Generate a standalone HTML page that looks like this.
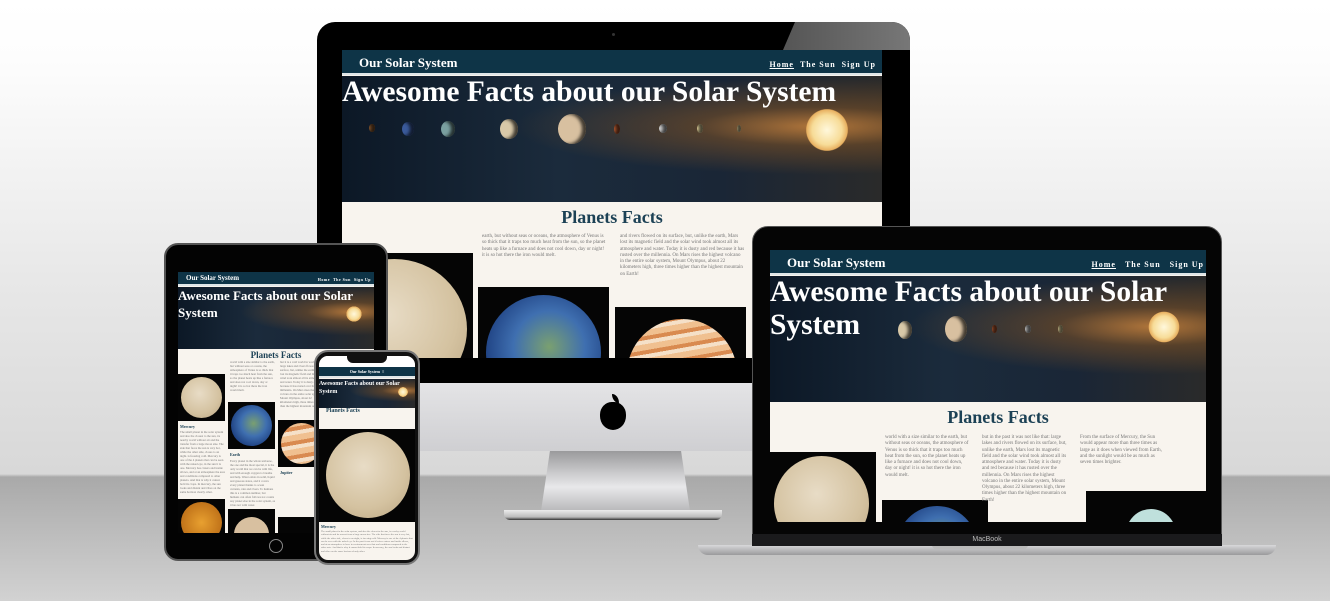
<!DOCTYPE html>
<html><head><meta charset="utf-8"><style>
*{margin:0;padding:0;box-sizing:border-box}
body{width:1330px;height:601px;overflow:hidden;position:relative;font-family:"Liberation Serif",serif;
background:linear-gradient(180deg,#fff 0,#fdfdfd 60px,#e6e6e6 300px,#d8d8d8 474px,#a9a9a9 477px,#b8b8b8 520px,#d2d2d2 601px)}
.a{position:absolute}
.nav{background:#0e3447;color:#fff;font-weight:bold;border-bottom:2px solid #dfe6e8}
.hero{background:
radial-gradient(circle at 50% 50%,#fff8dc 0,#f7dc98 35%,#e8b060 48%,rgba(230,150,60,0) 50%) no-repeat,
radial-gradient(ellipse at 88% 40%,rgba(200,130,60,.85) 0,rgba(120,80,40,.6) 18%,rgba(20,30,45,0) 45%),
linear-gradient(90deg,#0c1826,#1b2b3c 40%,#1a2636 70%,#2a2a2a);color:#fff;font-weight:bold;overflow:hidden}
.h2{color:#1c4155;font-weight:bold;text-align:center}
.txt{color:#777;line-height:1.25}
.img{background:#050505;overflow:hidden}
.pl{position:absolute;border-radius:50%}
.merc{background:radial-gradient(circle at 45% 40%,#e8dcc6,#d4c2a0 60%,#b8a380)}
.earth{background:radial-gradient(circle at 55% 45%,#7aa070,#3f6fb0 40%,#1d3f80 75%)}
.jup{background:repeating-linear-gradient(170deg,#f0c090 0 6px,#d98a50 6px 10px,#f5e0c8 10px 14px)}
.dot{position:absolute;border-radius:50%;box-shadow:inset -4px 0 3px rgba(0,0,0,.7)}
</style></head><body>

<!-- iMac -->
<div class="a" style="left:317px;top:22px;width:593px;height:362px;background:#000;border-radius:18px 18px 0 0"></div>
<div class="a" style="left:783px;top:22px;width:127px;height:28px;background:linear-gradient(90deg,#555,#777);clip-path:polygon(12px 0,100% 0,100% 100%,0 100%);border-radius:0 18px 0 0"></div>
<div class="a" style="left:612px;top:33px;width:3px;height:3px;border-radius:50%;background:#333"></div>
<div class="a" style="left:317px;top:383px;width:593px;height:68px;background:linear-gradient(#e4e4e6,#cfcfd2);border-radius:0 0 10px 10px"></div>
<div class="a" style="left:600px;top:402px;width:26px;height:28px;background:#000;border-radius:45% 45% 50% 50%"></div>
<div class="a" style="left:612px;top:394px;width:7px;height:9px;background:#000;border-radius:0 100% 0 100%"></div>
<div class="a" style="left:541px;top:451px;width:149px;height:60px;background:linear-gradient(#9a9a9c,#cfcfd1 40%,#e8e8ea 60%,#b8b8ba);clip-path:polygon(6% 0,94% 0,100% 100%,0 100%)"></div>
<div class="a" style="left:504px;top:510px;width:218px;height:10px;background:linear-gradient(#ececec,#bbb 70%,#333);border-radius:0 0 6px 6px"></div>

<div class="a" style="left:342px;top:50px;width:540px;height:308px;overflow:hidden;background:#f8f4ee">
 <div class="a nav" style="left:0;top:0;width:540px;height:25px"><span class="a" style="left:17px;top:5px;font-size:13px">Our Solar System</span><span class="a" style="right:6px;top:10px;font-size:8px;letter-spacing:1px"><u>Home</u>&nbsp;&nbsp;The Sun&nbsp;&nbsp;Sign Up</span></div>
 <div class="a hero" style="left:0;top:26px;width:540px;height:126px;background-size:60px 60px,auto,auto;background-position:455px 24px,0 0,0 0">
  <div class="a" style="left:0;top:0;font-size:29.5px;white-space:nowrap">Awesome Facts about our Solar System</div>
  <div class="dot" style="left:27px;top:48px;width:6px;height:8px;background:#8a5a30"></div>
  <div class="dot" style="left:60px;top:46px;width:12px;height:14px;background:#3a5a9a"></div>
  <div class="dot" style="left:99px;top:45px;width:14px;height:16px;background:#7aa0a0"></div>
  <div class="dot" style="left:158px;top:43px;width:18px;height:20px;background:#d8c8a8"></div>
  <div class="dot" style="left:216px;top:38px;width:28px;height:30px;background:#d8c0a0"></div>
  <div class="dot" style="left:272px;top:48px;width:6px;height:10px;background:#b85a30"></div>
  <div class="dot" style="left:317px;top:48px;width:8px;height:9px;background:#ccc"></div>
  <div class="dot" style="left:355px;top:48px;width:6px;height:9px;background:#e8d8a0"></div>
  <div class="dot" style="left:395px;top:49px;width:4px;height:7px;background:#e8d8a0"></div>
 </div>
 <div class="a h2" style="left:0;top:157px;width:540px;font-size:18px">Planets Facts</div>
 <div class="a img" style="left:0;top:203px;width:131px;height:110px"><div class="pl merc" style="left:-20px;top:6px;width:145px;height:140px"></div></div>
 <div class="a txt" style="left:140px;top:184px;width:125px;font-size:5px">earth, but without seas or oceans, the atmosphere of Venus is so thick that it traps too much heat from the sun, so the planet heats up like a furnace and does not cool down, day or night! it is so hot there the iron would melt.</div>
 <div class="a img" style="left:136px;top:237px;width:131px;height:80px"><div class="pl earth" style="left:8px;top:8px;width:115px;height:115px"></div></div>
 <div class="a txt" style="left:278px;top:184px;width:125px;font-size:5px">and rivers flowed on its surface, but, unlike the earth, Mars lost its magnetic field and the solar wind took almost all its atmosphere and water. Today it is dusty and red because it has rusted over the millennia. On Mars rises the highest volcano in the entire solar system, Mount Olympus, about 22 kilometers high, three times higher than the highest mountain on Earth!</div>
 <div class="a img" style="left:273px;top:257px;width:131px;height:60px"><div class="pl jup" style="left:12px;top:12px;width:110px;height:110px"></div></div>
</div>

<!-- Laptop -->
<div class="a" style="left:752px;top:226px;width:470px;height:320px;background:#050505;border-radius:16px 16px 0 0;border:1px solid #555"></div>
<div class="a" style="left:698px;top:545px;width:578px;height:10px;background:linear-gradient(#d8d8da,#9a9a9c);border-radius:0 0 40px 40px"></div>
<div class="a" style="left:932px;top:545px;width:96px;height:4px;background:#bbb;border-radius:0 0 4px 4px"></div>
<div class="a" style="left:752px;top:534px;width:470px;height:12px;background:#1a1a1c;color:#bbb;font-family:'Liberation Sans',sans-serif;font-size:7px;text-align:center;line-height:12px">MacBook</div>
<div class="a" style="left:770px;top:250px;width:436px;height:272px;overflow:hidden;background:#f8f4ee">
 <div class="a nav" style="left:0;top:0;width:436px;height:25px"><span class="a" style="left:17px;top:5px;font-size:13px">Our Solar System</span><span class="a" style="right:2px;top:10px;font-size:8px;letter-spacing:1px"><u>Home</u>&nbsp;&nbsp;&nbsp;The Sun&nbsp;&nbsp;&nbsp;Sign Up</span></div>
 <div class="a hero" style="left:0;top:26px;width:436px;height:126px;background-size:44px 44px,auto,auto;background-position:372px 29px,0 0,0 0">
  <div class="a" style="left:0;top:0;font-size:29.5px;line-height:33px;width:436px">Awesome Facts about our Solar System</div>
  <div class="dot" style="left:128px;top:45px;width:14px;height:18px;background:#d8c8a8"></div>
  <div class="dot" style="left:175px;top:40px;width:22px;height:26px;background:#d8c0a0"></div>
  <div class="dot" style="left:222px;top:49px;width:5px;height:8px;background:#b85a30"></div>
  <div class="dot" style="left:255px;top:49px;width:6px;height:8px;background:#ccc"></div>
  <div class="dot" style="left:288px;top:49px;width:5px;height:8px;background:#e8d8a0"></div>
 </div>
 <div class="a h2" style="left:0;top:157px;width:456px;font-size:18px">Planets Facts</div>
 <div class="a img" style="left:0;top:202px;width:106px;height:80px"><div class="pl merc" style="left:4px;top:4px;width:95px;height:95px"></div></div>
 <div class="a txt" style="left:115px;top:185px;width:85px;font-size:5px">world with a size similar to the earth, but without seas or oceans, the atmosphere of Venus is so thick that it traps too much heat from the sun, so the planet heats up like a furnace and does not cool down, day or night! it is so hot there the iron would melt.</div>
 <div class="a img" style="left:112px;top:250px;width:106px;height:30px"><div class="pl earth" style="left:15px;top:6px;width:80px;height:80px"></div></div>
 <div class="a txt" style="left:212px;top:185px;width:85px;font-size:5px">but in the past it was not like that: large lakes and rivers flowed on its surface, but, unlike the earth, Mars lost its magnetic field and the solar wind took almost all its atmosphere and water. Today it is dusty and red because it has rusted over the millennia. On Mars rises the highest volcano in the entire solar system, Mount Olympus, about 22 kilometers high, three times higher than the highest mountain on Earth!</div>
 <div class="a txt" style="left:310px;top:185px;width:86px;font-size:5px">From the surface of Mercury, the Sun would appear more than three times as large as it does when viewed from Earth, and the sunlight would be as much as seven times brighter.</div>
 <div class="a img" style="left:316px;top:241px;width:120px;height:40px"><div class="pl" style="left:40px;top:18px;width:50px;height:50px;background:#bfe0dc"></div></div>
</div>

<!-- Tablet -->
<div class="a" style="left:164px;top:243px;width:224px;height:318px;background:#030303;border-radius:14px;border:2px solid #555"></div>
<div class="a" style="left:269px;top:539px;width:14px;height:14px;border-radius:50%;border:1px solid #888"></div>
<div class="a" style="left:178px;top:272px;width:196px;height:261px;overflow:hidden;background:#f8f4ee">
 <div class="a nav" style="left:0;top:0;width:196px;height:14px"><span class="a" style="left:8px;top:2px;font-size:7px">Our Solar System</span><span class="a" style="right:3px;top:5px;font-size:4px;letter-spacing:.5px">Home&nbsp;&nbsp;The Sun&nbsp;&nbsp;Sign Up</span></div>
 <div class="a hero" style="left:0;top:15px;width:196px;height:62px;background-size:22px 22px,auto,auto;background-position:165px 16px,0 0,0 0">
  <div class="a" style="left:0;top:0;font-size:13px;line-height:17px;width:190px">Awesome Facts about our Solar System</div>
 </div>
 <div class="a h2" style="left:0;top:78px;width:196px;font-size:9px">Planets Facts</div>
 <div class="a img" style="left:0;top:102px;width:47px;height:47px"><div class="pl merc" style="left:3px;top:3px;width:41px;height:41px"></div></div>
 <div class="a" style="left:2px;top:152px;font-size:4px;color:#1c4155;font-weight:bold">Mercury</div>
 <div class="a txt" style="left:2px;top:158px;width:45px;font-size:3px;line-height:4px">The small planet in the solar system and also the closest to the sun, its nearby world without air and the transfer from a large moon size. The side that faces the sun is very hot, while the other side, closes to an night. is freezing cold. Mercury is one of the 4 planets that can be seen with the naked eye, in the sun it is one. Mercury has craters and inside allows, and at an atmosphere the area and conditions compared to other planets. And that is why it cannot hold its crops. In mercury, the sun looks and distant and vibes on the same horizon clearly other.</div>
 <div class="a img" style="left:0;top:227px;width:47px;height:40px"><div class="pl" style="left:3px;top:3px;width:41px;height:41px;background:radial-gradient(#e8a030,#b06010)"></div></div>
 <div class="a txt" style="left:52px;top:88px;width:45px;font-size:3px;line-height:4px">world with a size similar to the earth, but without seas or oceans, the atmosphere of Venus is so thick that it traps too much heat from the sun, so the planet heats up like a furnace and does not cool down, day or night! it is so hot there the iron would melt.</div>
 <div class="a img" style="left:50px;top:130px;width:47px;height:47px"><div class="pl earth" style="left:3px;top:3px;width:41px;height:41px"></div></div>
 <div class="a" style="left:52px;top:180px;font-size:4px;color:#1c4155;font-weight:bold">Earth</div>
 <div class="a txt" style="left:52px;top:187px;width:45px;font-size:3px;line-height:4px">Every planet in the whole universe, the one and the most special, it is the only world that we can be with life, and with enough oxygen to breathe and help. Water exists in solid, liquid and gaseous states, and it covers every planet thanks to ocean currents, rain and rivers. To humans this is a common number, but humans can often follows not counts any planet else in the solar system, as it has not with water.</div>
 <div class="a img" style="left:50px;top:237px;width:47px;height:30px"><div class="pl" style="left:6px;top:8px;width:35px;height:35px;background:#d8c0a0"></div></div>
 <div class="a txt" style="left:102px;top:88px;width:45px;font-size:3px;line-height:4px">but it is a cold world in world with large lakes and rivers flowed on its surface, but, unlike the earth, Mars lost its magnetic field and the solar wind took almost all its atmosphere and water. Today it is dusty and red because it has rusted over the millennia. On Mars rises the highest volcano in the entire solar system, Mount Olympus, about 22 kilometers high, three times higher than the highest mountain on Earth!</div>
 <div class="a img" style="left:100px;top:148px;width:47px;height:47px"><div class="pl jup" style="left:3px;top:3px;width:41px;height:41px"></div></div>
 <div class="a" style="left:102px;top:198px;font-size:4px;color:#1c4155;font-weight:bold">Jupiter</div>
 <div class="a img" style="left:100px;top:245px;width:47px;height:20px"></div>
</div>

<!-- Phone -->
<div class="a" style="left:314px;top:350px;width:106px;height:215px;background:#111;border-radius:14px;border:2px solid #777"></div>
<div class="a" style="left:319px;top:356px;width:96px;height:204px;overflow:hidden;background:#f8f4ee;border-radius:9px">
 <div class="a" style="left:0;top:0;width:96px;height:12px;background:#fff"></div>
 <div class="a" style="left:28px;top:0;width:40px;height:7px;background:#111;border-radius:0 0 6px 6px"></div>
 <div class="a nav" style="left:0;top:11px;width:96px;height:11px;text-align:center;font-size:4px;line-height:10px">Our Solar System &nbsp;≡</div>
 <div class="a hero" style="left:0;top:23px;width:96px;height:29px;background-size:14px 14px,auto,auto;background-position:77px 6px,0 0,0 0">
  <div class="a" style="left:0;top:1px;font-size:6px;line-height:8px;width:96px">Awesome Facts about our Solar System</div>
 </div>
 <div class="a h2" style="left:7px;top:52px;font-size:6px;text-align:left">Planets Facts</div>
 <div class="a img" style="left:0;top:73px;width:96px;height:93px"><div class="pl merc" style="left:7px;top:3px;width:84px;height:86px"></div></div>
 <div class="a" style="left:2px;top:168px;font-size:4px;color:#1c4155;font-weight:bold">Mercury</div>
 <div class="a txt" style="left:2px;top:174px;width:92px;font-size:2.5px;line-height:3.3px">The small planet in the solar system, and also the closest to the sun, is a rocky world without air and its nearest from a large moon size. The side that faces the sun is very hot, while the other side, closes to an night, is freezing cold. Mercury is one of the 4 planets that can be seen with the naked eye. In the past it was not it before craters and inside allows, and at an atmosphere to have in environment save that and conditions compared to the other note. And that is why it cannot hold its crops. In mercury, the sun looks and distant and vibes on the same horizon clearly other.</div>
</div>
</body></html>
